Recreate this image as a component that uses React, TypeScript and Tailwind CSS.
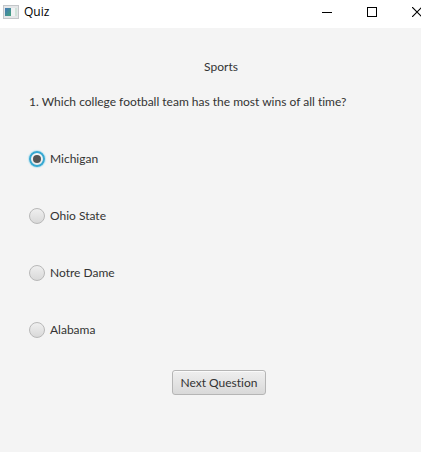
import { useState } from "react";

const options = ["Michigan", "Ohio State", "Notre Dame", "Alabama"];

function AppIcon() {
  return (
    <svg width="16" height="14" viewBox="0 0 16 14" className="shrink-0" aria-hidden="true">
      <defs>
        <linearGradient id="pane" x1="0" y1="0" x2="1" y2="1">
          <stop offset="0" stopColor="#4377b8" />
          <stop offset="1" stopColor="#43a37c" />
        </linearGradient>
      </defs>
      <rect x="0.5" y="0.5" width="15" height="13" fill="#e4e6e8" stroke="#c3c6c9" />
      <rect x="2" y="3" width="6" height="8" fill="url(#pane)" />
      <rect x="8" y="3" width="4" height="8" fill="#f0f2f4" />
      <rect x="12" y="3" width="2" height="8" fill="#cfe3da" />
    </svg>
  );
}

function TitleBar() {
  const control = "flex h-7 w-[45px] items-center justify-center";
  return (
    <header className="flex h-7 items-center overflow-hidden bg-white pb-1 pl-[3px] font-['Open_Sans','Noto_Sans',sans-serif] text-black">
      <AppIcon />
      <h1 className="ml-[5px] flex-1 leading-4">Quiz</h1>
      <div className="-mr-[18px] flex shrink-0">
        <button type="button" aria-label="Minimize" className={control}>
          <svg width="10" height="10" shapeRendering="crispEdges">
            <path d="M0 5h10v1H0z" />
          </svg>
        </button>
        <button type="button" aria-label="Maximize" className={control}>
          <svg width="10" height="10" shapeRendering="crispEdges">
            <rect x="0.5" y="0.5" width="9" height="9" fill="none" stroke="black" />
          </svg>
        </button>
        <button type="button" aria-label="Close" className={control}>
          <svg width="10" height="10">
            <path d="M0 0l10 10M10 0L0 10" stroke="black" strokeWidth="1.2" />
          </svg>
        </button>
      </div>
    </header>
  );
}

export default function App() {
  const [answer, setAnswer] = useState("Michigan");
  return (
    <div className="flex min-h-screen flex-col overflow-hidden bg-[#f4f4f4] font-['Lato','Open_Sans',sans-serif] text-xs text-[#333333] [font-variant-ligatures:none]">
      <TitleBar />
      <main className="flex flex-col pl-[29px] pr-2 pt-[31px]">
        <h2 className="text-center leading-4">Sports</h2>
        <fieldset className="mt-[19px]">
          <legend className="whitespace-nowrap leading-4">
            1. Which college football team has the most wins of all time?
          </legend>
          <div className="flex flex-col items-start gap-[41px] pt-[41px]">
            {options.map((option) => (
              <label key={option} className="flex items-center gap-[5px] leading-4">
                <input
                  type="radio"
                  name="answer"
                  value={option}
                  checked={answer === option}
                  onChange={() => setAnswer(option)}
                  className="grid size-4 appearance-none place-items-center rounded-full border border-[#b8b8b8] bg-linear-to-b from-[#efefef] to-[#d9d9d9] before:size-2 before:rounded-full checked:border-2 checked:border-[#35a8d2] checked:from-[#f8f8f8] checked:to-[#e8e8e8] checked:shadow-[0_0_1px_1px_#bfe4f1] checked:before:bg-[#555555]"
                />
                {option}
              </label>
            ))}
          </div>
        </fieldset>
        <button
          type="button"
          className="mr-1 mt-8 h-[25px] self-center rounded-[3px] border border-[#b5b5b5] bg-linear-to-b from-[#efefef] to-[#d9d9d9] px-[7px] leading-4 shadow-[inset_0_1px_0_#fafafa]"
        >
          Next Question
        </button>
      </main>
    </div>
  );
}
